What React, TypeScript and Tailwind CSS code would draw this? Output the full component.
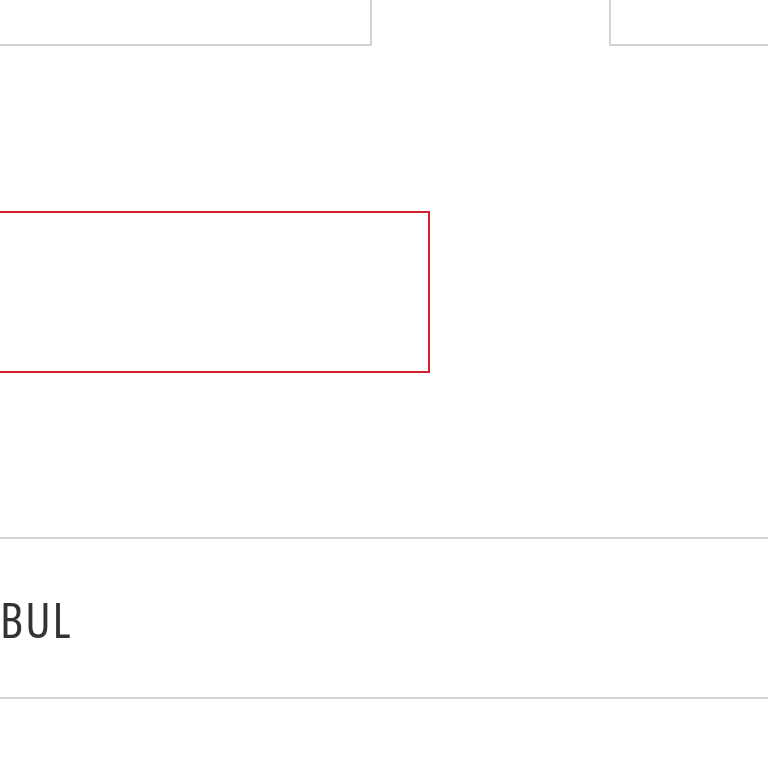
export default function App() {
  return (
    <div className="w-[768px] h-[768px] overflow-hidden bg-white">
      {/* top cards */}
      <div className="flex h-[46px] justify-between">
        <div className="w-[372px] border-r-2 border-b-2 border-[#d4d4d4] bg-white" />
        <div className="w-[159px] border-l-2 border-b-2 border-[#d4d4d4] bg-white" />
      </div>

      {/* red outlined box */}
      <div className="mt-[165px] h-[162px] w-[430px] border-2 border-l-0 border-[#d3202b]" />

      {/* city row */}
      <div className="mt-[164px] h-[162px] border-y-2 border-[#d4d4d4] flex items-center">
        <span className="pt-[2px] font-['Open_Sans',sans-serif] text-[49px] leading-none text-[#333333] tracking-[2px] [font-stretch:87.5%]">
          BUL
        </span>
      </div>
    </div>
  );
}
